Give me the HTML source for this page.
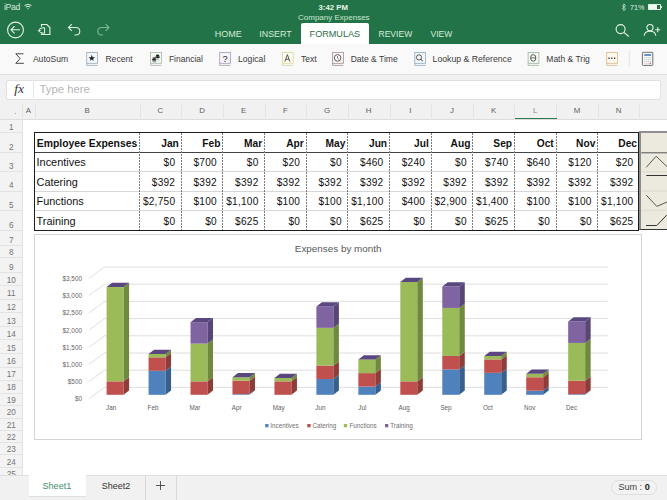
<!DOCTYPE html><html><head><meta charset="utf-8"><style>
*{margin:0;padding:0;box-sizing:border-box}
html,body{width:667px;height:500px;overflow:hidden;background:#fff;font-family:"Liberation Sans",sans-serif}
.a{position:absolute;white-space:nowrap}
</style></head><body>

<div class="a" style="left:0;top:0;width:667px;height:44px;background:#237348"></div>
<div class="a" style="left:4px;top:3.2px;font-size:8.6px;letter-spacing:-0.3px;line-height:9px;color:#d6eadb">iPad</div>
<svg class="a" style="left:24px;top:4px" width="8" height="6" viewBox="0 0 8 6"><path d="M0.5 1.5 Q4 -0.8 7.5 1.5" stroke="#d6eadb" stroke-width="1" fill="none"/><path d="M1.8 3 Q4 1.6 6.2 3" stroke="#d6eadb" stroke-width="1" fill="none"/><path d="M3 4.6 L4 5.6 L5 4.6 Q4 3.8 3 4.6Z" fill="#d6eadb"/></svg>
<div class="a" style="left:318.5px;top:2.5px;font-size:7.8px;line-height:9px;color:#e8f4ea;font-weight:bold">3:42 PM</div>
<div class="a" style="left:298px;top:12.5px;font-size:8px;line-height:9px;color:#c8e6cf">Company Expenses</div>
<svg class="a" style="left:620.5px;top:2.6px" width="6" height="9" viewBox="0 0 6 9"><path d="M1 2.6 L4.6 5.8 L2.8 7.8 V0.8 L4.6 2.8 L1 6" stroke="#c4e2cc" stroke-width="0.8" fill="none"/></svg>
<div class="a" style="left:630px;top:2.5px;font-size:7.2px;line-height:9px;color:#e0f0e4">71%</div>
<div class="a" style="left:648px;top:4.3px;width:13.2px;height:5.8px;border:0.6px solid #e0f0e4;border-radius:0.8px"></div>
<div class="a" style="left:649px;top:5.3px;width:8.3px;height:3.6px;background:#f2faf4"></div>
<div class="a" style="left:661.2px;top:6px;width:1.2px;height:2.2px;background:#e0f0e4"></div>
<div class="a" style="left:301px;top:23.3px;width:68px;height:21px;background:#fff;border-radius:2px 2px 0 0"></div>
<div class="a" style="left:214.7px;top:29.4px;font-size:9px;line-height:10px;color:#d3ecd9">HOME</div>
<div class="a" style="left:259.3px;top:29.4px;font-size:8.9px;line-height:10px;color:#d3ecd9">INSERT</div>
<div class="a" style="left:378.5px;top:29.4px;font-size:8.55px;line-height:10px;color:#d3ecd9">REVIEW</div>
<div class="a" style="left:430.5px;top:29.4px;font-size:8.5px;line-height:10px;color:#d3ecd9">VIEW</div>
<div class="a" style="left:309.6px;top:29.4px;font-size:9.1px;line-height:10px;color:#2c6b45">FORMULAS</div>
<svg class="a" style="left:0;top:15px" width="130" height="30" viewBox="0 15 130 30"><circle cx="15.5" cy="30" r="7.9" stroke="#e6f3e9" stroke-width="1.1" fill="none"/><path d="M11 29.8 H20 M14.6 26.2 L11 29.8 L14.6 33.4" stroke="#e6f3e9" stroke-width="1.1" fill="none"/><path d="M41.5 26.8 V24.5 H46.8 L49.9 27.6 V34.5 H41.5 V33.4" stroke="#e6f3e9" stroke-width="1.1" fill="none"/><path d="M44.6 27.8 V33.3" stroke="#e6f3e9" stroke-width="1" fill="none"/><path d="M44.6 27.8 Q39.6 27.6 39.3 30.6 M40.3 32.1 Q41.2 33.3 44.6 33.3" stroke="#e6f3e9" stroke-width="1.1" fill="none"/><path d="M37.7 30.1 L40.9 30.1 L39.3 32.4Z" fill="#e6f3e9"/><path d="M68.5 27.5 H75.5 Q79.8 27.5 79.8 31.2 Q79.8 35 75.5 35 H74.5 M71.8 24.2 L68.5 27.5 L71.8 30.8" stroke="#dff0e3" stroke-width="1.1" fill="none"/><path d="M109 27.5 H102 Q97.8 27.5 97.8 31.2 Q97.8 35 102 35 H103 M105.7 24.2 L109 27.5 L105.7 30.8" stroke="#7fb793" stroke-width="1.1" fill="none"/></svg>
<svg class="a" style="left:600px;top:15px" width="67" height="30" viewBox="600 15 67 30"><circle cx="620.6" cy="29.1" r="4.5" stroke="#e6f3e9" stroke-width="1.1" fill="none"/><path d="M623.9 32.4 L628.8 36.5" stroke="#e6f3e9" stroke-width="1.1" fill="none"/><circle cx="650" cy="27.6" r="3.1" stroke="#e6f3e9" stroke-width="1.1" fill="none"/><path d="M644.2 35.8 Q644.5 31.2 650 31.2 Q655.5 31.2 655.8 35.8" stroke="#e6f3e9" stroke-width="1.1" fill="none"/><path d="M655.2 29.7 H660.2 M657.7 27.2 V32.2" stroke="#e6f3e9" stroke-width="1.1" fill="none"/></svg>
<div class="a" style="left:0;top:44px;width:667px;height:31px;background:#f9f9f9;border-bottom:1px solid #dedede"></div>
<div class="a" style="left:32.9px;top:53.5px;font-size:8.6px;line-height:10px;color:#3c3c3c">AutoSum</div>
<div class="a" style="left:105.4px;top:53.5px;font-size:8.6px;line-height:10px;color:#3c3c3c">Recent</div>
<div class="a" style="left:168.9px;top:53.5px;font-size:8.5px;line-height:10px;color:#3c3c3c">Financial</div>
<div class="a" style="left:238px;top:53.5px;font-size:8.65px;line-height:10px;color:#3c3c3c">Logical</div>
<div class="a" style="left:301px;top:53.5px;font-size:8.6px;line-height:10px;color:#3c3c3c">Text</div>
<div class="a" style="left:350.7px;top:53.5px;font-size:8.55px;line-height:10px;color:#3c3c3c">Date & Time</div>
<div class="a" style="left:432.6px;top:53.5px;font-size:8.7px;line-height:10px;color:#3c3c3c">Lookup & Reference</div>
<div class="a" style="left:546.3px;top:53.5px;font-size:8.5px;line-height:10px;color:#3c3c3c">Math & Trig</div>
<svg class="a" style="left:0;top:44px" width="667" height="30" viewBox="0 44 667 30"><path d="M23.5 53.8 H15.8 L20.2 58.5 L15.8 63.3 H23.8" stroke="#333" stroke-width="0.9" fill="none"/>
<rect x="86.70" y="52.4" width="10.8" height="10.9" fill="#f3f7fb" stroke="#97a7b8" stroke-width="0.8"/><path d="M86.70 63 V65.4 H97.50" stroke="#97a7b8" stroke-width="0.8" fill="none"/>
<rect x="150.60" y="52.4" width="10.8" height="10.9" fill="#f3f8f3" stroke="#a3b8a3" stroke-width="0.8"/><path d="M150.60 63 V65.4 H161.40" stroke="#a3b8a3" stroke-width="0.8" fill="none"/>
<rect x="219.70" y="52.4" width="10.8" height="10.9" fill="#f7f5fa" stroke="#a49bb8" stroke-width="0.8"/><path d="M219.70 63 V65.4 H230.50" stroke="#a49bb8" stroke-width="0.8" fill="none"/>
<rect x="282.40" y="52.4" width="10.8" height="10.9" fill="#fbfbef" stroke="#dcd79a" stroke-width="0.8"/><path d="M282.40 63 V65.4 H293.20" stroke="#dcd79a" stroke-width="0.8" fill="none"/>
<rect x="332.60" y="52.4" width="10.8" height="10.9" fill="#faf6f6" stroke="#a88c8c" stroke-width="0.8"/><path d="M332.60 63 V65.4 H343.40" stroke="#a88c8c" stroke-width="0.8" fill="none"/>
<rect x="414.80" y="52.4" width="10.8" height="10.9" fill="#f3f7fb" stroke="#8fa9c4" stroke-width="0.8"/><path d="M414.80 63 V65.4 H425.60" stroke="#8fa9c4" stroke-width="0.8" fill="none"/>
<rect x="528.10" y="52.4" width="10.8" height="10.9" fill="#f3f8f3" stroke="#9bb69b" stroke-width="0.8"/><path d="M528.10 63 V65.4 H538.90" stroke="#9bb69b" stroke-width="0.8" fill="none"/>
<rect x="606.70" y="52.4" width="10.8" height="10.9" fill="#fbf6ee" stroke="#ddb788" stroke-width="0.8"/><path d="M606.70 63 V65.4 H617.50" stroke="#ddb788" stroke-width="0.8" fill="none"/>
<path d="M91.8 54.8 L92.6 57.2 L95.1 57.2 L93.1 58.7 L93.8 61.1 L91.8 59.6 L89.8 61.1 L90.5 58.7 L88.5 57.2 L91 57.2Z" fill="#1e1e1e"/>
<ellipse cx="157.6" cy="56.9" rx="2.3" ry="1.3" fill="#222"/><path d="M155.3 56.3 Q157.6 55.2 159.9 56.3" stroke="#fff" stroke-width="0.5" fill="none"/><ellipse cx="157.6" cy="55.4" rx="1.7" ry="0.8" fill="#222"/><ellipse cx="154.2" cy="59.5" rx="2.3" ry="1.3" fill="#222"/><path d="M151.9 58.9 Q154.2 57.8 156.5 58.9" stroke="#fff" stroke-width="0.5" fill="none"/><ellipse cx="154.2" cy="58" rx="1.7" ry="0.8" fill="#222"/><path d="M152.5 61.5 Q154.4 62.3 156.3 61.5" stroke="#555" stroke-width="0.7" fill="none"/><path d="M157.3 58.8 L158.8 60.3" stroke="#444" stroke-width="0.7"/>
<text x="222.6" y="61.6" font-size="9.2" font-family="Liberation Sans" fill="#222">?</text>
<path d="M284.9 61.6 L287.4 54.6 L289.9 61.6 M285.8 59.3 H289" stroke="#333" stroke-width="0.8" fill="none"/>
<circle cx="337.6" cy="57.9" r="3.3" stroke="#333" stroke-width="0.8" fill="#fff"/><path d="M337.5 56.1 V58.1 L338.9 59.2" stroke="#444" stroke-width="0.7" fill="none"/>
<circle cx="419" cy="57.4" r="2.6" stroke="#333" stroke-width="0.8" fill="#fff"/><path d="M420.8 59.3 L422.7 61.1" stroke="#222" stroke-width="1"/>
<ellipse cx="533.2" cy="57.9" rx="2.6" ry="3.3" stroke="#333" stroke-width="0.8" fill="none"/><path d="M530.8 57.9 H535.6" stroke="#333" stroke-width="0.7"/>
<path d="M608.4 57.5 h1.2 v1.6 h-1.2z M611.2 57.5 h1.2 v1.6 h-1.2z M614 57.5 h1.2 v1.6 h-1.2z" fill="#333"/>
<path d="M629.3 50.6 V66.6" stroke="#dedede" stroke-width="0.8"/>
<rect x="642.4" y="52.3" width="10.4" height="13.1" rx="0.8" fill="#f6f8fa" stroke="#606060" stroke-width="0.9"/><rect x="644.2" y="54.2" width="6.8" height="1.6" fill="#4a78c0"/>
<rect x="644.10" y="57.00" width="1.3" height="1.2" fill="#cfd6cf"/>
<rect x="645.95" y="57.00" width="1.3" height="1.2" fill="#cfd6cf"/>
<rect x="647.80" y="57.00" width="1.3" height="1.2" fill="#cfd6cf"/>
<rect x="649.65" y="57.00" width="1.3" height="1.2" fill="#cfd6cf"/>
<rect x="644.10" y="58.90" width="1.3" height="1.2" fill="#cfd6cf"/>
<rect x="645.95" y="58.90" width="1.3" height="1.2" fill="#cfd6cf"/>
<rect x="647.80" y="58.90" width="1.3" height="1.2" fill="#cfd6cf"/>
<rect x="649.65" y="58.90" width="1.3" height="1.2" fill="#cfd6cf"/>
<rect x="644.10" y="60.80" width="1.3" height="1.2" fill="#cfd6cf"/>
<rect x="645.95" y="60.80" width="1.3" height="1.2" fill="#cfd6cf"/>
<rect x="647.80" y="60.80" width="1.3" height="1.2" fill="#cfd6cf"/>
<rect x="649.65" y="60.80" width="1.3" height="1.2" fill="#cfd6cf"/>
<rect x="644.10" y="62.70" width="1.3" height="1.2" fill="#e8c8d0"/>
<rect x="645.95" y="62.70" width="1.3" height="1.2" fill="#e8c8d0"/>
<rect x="647.80" y="62.70" width="1.3" height="1.2" fill="#e8c8d0"/>
<rect x="649.65" y="62.70" width="1.3" height="1.2" fill="#c05a6a"/>
</svg>
<div class="a" style="left:0;top:75px;width:667px;height:25px;background:#f1f1f1"></div>
<div class="a" style="left:6px;top:80.2px;width:655px;height:19.6px;background:#fff;border:0.7px solid #e0e0e0;border-radius:2px"></div>
<div class="a" style="left:33px;top:82px;width:0.7px;height:16px;background:#e3e3e3"></div>
<div class="a" style="left:14.3px;top:82px;font-size:13.5px;line-height:14px;font-family:'Liberation Serif',serif;font-style:italic;color:#333">fx</div>
<div class="a" style="left:39.6px;top:83.2px;font-size:11.3px;line-height:13px;color:#b5b5b5">Type here</div>
<div class="a" style="left:0;top:100px;width:667px;height:20px;background:#f1f1f1;border-bottom:1px solid #dcdcdc"></div>
<div class="a" style="left:22.40px;top:104px;width:0.8px;height:15.5px;background:#e4e4e4"></div>
<div class="a" style="left:34.50px;top:104px;width:0.8px;height:15.5px;background:#e4e4e4"></div>
<div class="a" style="left:139.60px;top:104px;width:0.8px;height:15.5px;background:#e4e4e4"></div>
<div class="a" style="left:181.25px;top:104px;width:0.8px;height:15.5px;background:#e4e4e4"></div>
<div class="a" style="left:222.90px;top:104px;width:0.8px;height:15.5px;background:#e4e4e4"></div>
<div class="a" style="left:264.55px;top:104px;width:0.8px;height:15.5px;background:#e4e4e4"></div>
<div class="a" style="left:306.20px;top:104px;width:0.8px;height:15.5px;background:#e4e4e4"></div>
<div class="a" style="left:347.85px;top:104px;width:0.8px;height:15.5px;background:#e4e4e4"></div>
<div class="a" style="left:389.50px;top:104px;width:0.8px;height:15.5px;background:#e4e4e4"></div>
<div class="a" style="left:431.15px;top:104px;width:0.8px;height:15.5px;background:#e4e4e4"></div>
<div class="a" style="left:472.80px;top:104px;width:0.8px;height:15.5px;background:#e4e4e4"></div>
<div class="a" style="left:514.45px;top:104px;width:0.8px;height:15.5px;background:#e4e4e4"></div>
<div class="a" style="left:556.10px;top:104px;width:0.8px;height:15.5px;background:#e4e4e4"></div>
<div class="a" style="left:597.75px;top:104px;width:0.8px;height:15.5px;background:#e4e4e4"></div>
<div class="a" style="left:639.40px;top:104px;width:0.8px;height:15.5px;background:#e4e4e4"></div>
<div class="a" style="left:22.40px;top:105.8px;width:12.10px;text-align:center;font-size:7.9px;line-height:10px;color:#5e5e5e">A</div>
<div class="a" style="left:34.50px;top:105.8px;width:105.10px;text-align:center;font-size:7.9px;line-height:10px;color:#5e5e5e">B</div>
<div class="a" style="left:139.60px;top:105.8px;width:41.65px;text-align:center;font-size:7.9px;line-height:10px;color:#5e5e5e">C</div>
<div class="a" style="left:181.25px;top:105.8px;width:41.65px;text-align:center;font-size:7.9px;line-height:10px;color:#5e5e5e">D</div>
<div class="a" style="left:222.90px;top:105.8px;width:41.65px;text-align:center;font-size:7.9px;line-height:10px;color:#5e5e5e">E</div>
<div class="a" style="left:264.55px;top:105.8px;width:41.65px;text-align:center;font-size:7.9px;line-height:10px;color:#5e5e5e">F</div>
<div class="a" style="left:306.20px;top:105.8px;width:41.65px;text-align:center;font-size:7.9px;line-height:10px;color:#5e5e5e">G</div>
<div class="a" style="left:347.85px;top:105.8px;width:41.65px;text-align:center;font-size:7.9px;line-height:10px;color:#5e5e5e">H</div>
<div class="a" style="left:389.50px;top:105.8px;width:41.65px;text-align:center;font-size:7.9px;line-height:10px;color:#5e5e5e">I</div>
<div class="a" style="left:431.15px;top:105.8px;width:41.65px;text-align:center;font-size:7.9px;line-height:10px;color:#5e5e5e">J</div>
<div class="a" style="left:472.80px;top:105.8px;width:41.65px;text-align:center;font-size:7.9px;line-height:10px;color:#5e5e5e">K</div>
<div class="a" style="left:514.45px;top:105.8px;width:41.65px;text-align:center;font-size:7.9px;line-height:10px;color:#8a8a8a">L</div>
<div class="a" style="left:556.10px;top:105.8px;width:41.65px;text-align:center;font-size:7.9px;line-height:10px;color:#5e5e5e">M</div>
<div class="a" style="left:597.75px;top:105.8px;width:41.65px;text-align:center;font-size:7.9px;line-height:10px;color:#5e5e5e">N</div>
<div class="a" style="left:515.45px;top:117.9px;width:41.15px;height:1.5px;background:#2d7b4f"></div>
<div class="a" style="left:14.7px;top:112.7px;width:1.4px;height:1.4px;border-radius:1px;background:#8a8a8a"></div>
<div class="a" style="left:0;top:119.5px;width:23px;height:356px;background:#f3f3f3;border-right:0.8px solid #e2e2e2"></div>
<div class="a" style="left:0;top:132.10px;width:22.4px;height:0.8px;background:#e3e3e3"></div>
<div class="a" style="left:0;top:122.90px;width:22.4px;text-align:center;font-size:8.2px;line-height:10px;color:#747474">1</div>
<div class="a" style="left:0;top:151.90px;width:22.4px;height:0.8px;background:#e3e3e3"></div>
<div class="a" style="left:0;top:142.70px;width:22.4px;text-align:center;font-size:8.2px;line-height:10px;color:#747474">2</div>
<div class="a" style="left:0;top:171.10px;width:22.4px;height:0.8px;background:#e3e3e3"></div>
<div class="a" style="left:0;top:161.90px;width:22.4px;text-align:center;font-size:8.2px;line-height:10px;color:#747474">3</div>
<div class="a" style="left:0;top:190.60px;width:22.4px;height:0.8px;background:#e3e3e3"></div>
<div class="a" style="left:0;top:181.40px;width:22.4px;text-align:center;font-size:8.2px;line-height:10px;color:#747474">4</div>
<div class="a" style="left:0;top:210.10px;width:22.4px;height:0.8px;background:#e3e3e3"></div>
<div class="a" style="left:0;top:200.90px;width:22.4px;text-align:center;font-size:8.2px;line-height:10px;color:#747474">5</div>
<div class="a" style="left:0;top:229.80px;width:22.4px;height:0.8px;background:#e3e3e3"></div>
<div class="a" style="left:0;top:220.60px;width:22.4px;text-align:center;font-size:8.2px;line-height:10px;color:#747474">6</div>
<div class="a" style="left:0;top:245.20px;width:22.4px;height:0.8px;background:#e3e3e3"></div>
<div class="a" style="left:0;top:236.00px;width:22.4px;text-align:center;font-size:8.2px;line-height:10px;color:#747474">7</div>
<div class="a" style="left:0;top:257.40px;width:22.4px;height:0.8px;background:#e3e3e3"></div>
<div class="a" style="left:0;top:248.20px;width:22.4px;text-align:center;font-size:8.2px;line-height:10px;color:#747474">8</div>
<div class="a" style="left:0;top:271.80px;width:22.4px;height:0.8px;background:#e3e3e3"></div>
<div class="a" style="left:0;top:262.60px;width:22.4px;text-align:center;font-size:8.2px;line-height:10px;color:#747474">9</div>
<div class="a" style="left:0;top:285.30px;width:22.4px;height:0.8px;background:#e3e3e3"></div>
<div class="a" style="left:0;top:276.10px;width:22.4px;text-align:center;font-size:8.2px;line-height:10px;color:#747474">10</div>
<div class="a" style="left:0;top:298.60px;width:22.4px;height:0.8px;background:#e3e3e3"></div>
<div class="a" style="left:0;top:289.40px;width:22.4px;text-align:center;font-size:8.2px;line-height:10px;color:#747474">11</div>
<div class="a" style="left:0;top:312.20px;width:22.4px;height:0.8px;background:#e3e3e3"></div>
<div class="a" style="left:0;top:303.00px;width:22.4px;text-align:center;font-size:8.2px;line-height:10px;color:#747474">12</div>
<div class="a" style="left:0;top:325.90px;width:22.4px;height:0.8px;background:#e3e3e3"></div>
<div class="a" style="left:0;top:316.70px;width:22.4px;text-align:center;font-size:8.2px;line-height:10px;color:#747474">13</div>
<div class="a" style="left:0;top:339.20px;width:22.4px;height:0.8px;background:#e3e3e3"></div>
<div class="a" style="left:0;top:330.00px;width:22.4px;text-align:center;font-size:8.2px;line-height:10px;color:#747474">14</div>
<div class="a" style="left:0;top:353.00px;width:22.4px;height:0.8px;background:#e3e3e3"></div>
<div class="a" style="left:0;top:343.80px;width:22.4px;text-align:center;font-size:8.2px;line-height:10px;color:#747474">15</div>
<div class="a" style="left:0;top:366.60px;width:22.4px;height:0.8px;background:#e3e3e3"></div>
<div class="a" style="left:0;top:357.40px;width:22.4px;text-align:center;font-size:8.2px;line-height:10px;color:#747474">16</div>
<div class="a" style="left:0;top:379.60px;width:22.4px;height:0.8px;background:#e3e3e3"></div>
<div class="a" style="left:0;top:370.40px;width:22.4px;text-align:center;font-size:8.2px;line-height:10px;color:#747474">17</div>
<div class="a" style="left:0;top:392.60px;width:22.4px;height:0.8px;background:#e3e3e3"></div>
<div class="a" style="left:0;top:383.40px;width:22.4px;text-align:center;font-size:8.2px;line-height:10px;color:#747474">18</div>
<div class="a" style="left:0;top:405.10px;width:22.4px;height:0.8px;background:#e3e3e3"></div>
<div class="a" style="left:0;top:395.90px;width:22.4px;text-align:center;font-size:8.2px;line-height:10px;color:#747474">19</div>
<div class="a" style="left:0;top:417.60px;width:22.4px;height:0.8px;background:#e3e3e3"></div>
<div class="a" style="left:0;top:408.40px;width:22.4px;text-align:center;font-size:8.2px;line-height:10px;color:#747474">20</div>
<div class="a" style="left:0;top:429.80px;width:22.4px;height:0.8px;background:#e3e3e3"></div>
<div class="a" style="left:0;top:420.60px;width:22.4px;text-align:center;font-size:8.2px;line-height:10px;color:#747474">21</div>
<div class="a" style="left:0;top:442.20px;width:22.4px;height:0.8px;background:#e3e3e3"></div>
<div class="a" style="left:0;top:433.00px;width:22.4px;text-align:center;font-size:8.2px;line-height:10px;color:#747474">22</div>
<div class="a" style="left:0;top:454.40px;width:22.4px;height:0.8px;background:#e3e3e3"></div>
<div class="a" style="left:0;top:445.20px;width:22.4px;text-align:center;font-size:8.2px;line-height:10px;color:#747474">23</div>
<div class="a" style="left:0;top:467.00px;width:22.4px;height:0.8px;background:#e3e3e3"></div>
<div class="a" style="left:0;top:457.80px;width:22.4px;text-align:center;font-size:8.2px;line-height:10px;color:#747474">24</div>
<div class="a" style="left:0;top:479.60px;width:22.4px;height:0.8px;background:#e3e3e3"></div>
<div class="a" style="left:0;top:470.40px;width:22.4px;text-align:center;font-size:8.2px;line-height:10px;color:#747474">25</div>
<div class="a" style="left:23px;top:119.5px;width:700px;height:356px;background:#fff"></div>
<div class="a" style="left:34.2px;top:171.10px;width:604.80px;height:0.8px;background:#d6d6d6"></div>
<div class="a" style="left:34.2px;top:190.60px;width:604.80px;height:0.8px;background:#d6d6d6"></div>
<div class="a" style="left:34.2px;top:210.10px;width:604.80px;height:0.8px;background:#d6d6d6"></div>
<div class="a" style="left:34.2px;top:151.90px;width:604.80px;height:1.1px;background:#444"></div>
<svg class="a" style="left:0;top:0" width="667" height="240" viewBox="0 0 667 240"><path d="M139.50 133 V230" stroke="#7a7a7a" stroke-width="1" stroke-dasharray="2 1" fill="none"/><path d="M181.50 133 V230" stroke="#7a7a7a" stroke-width="1" stroke-dasharray="2 1" fill="none"/><path d="M222.50 133 V230" stroke="#7a7a7a" stroke-width="1" stroke-dasharray="2 1" fill="none"/><path d="M264.50 133 V230" stroke="#7a7a7a" stroke-width="1" stroke-dasharray="2 1" fill="none"/><path d="M306.50 133 V230" stroke="#7a7a7a" stroke-width="1" stroke-dasharray="2 1" fill="none"/><path d="M347.50 133 V230" stroke="#7a7a7a" stroke-width="1" stroke-dasharray="2 1" fill="none"/><path d="M389.50 133 V230" stroke="#7a7a7a" stroke-width="1" stroke-dasharray="2 1" fill="none"/><path d="M431.50 133 V230" stroke="#7a7a7a" stroke-width="1" stroke-dasharray="2 1" fill="none"/><path d="M472.50 133 V230" stroke="#7a7a7a" stroke-width="1" stroke-dasharray="2 1" fill="none"/><path d="M514.50 133 V230" stroke="#7a7a7a" stroke-width="1" stroke-dasharray="2 1" fill="none"/><path d="M556.50 133 V230" stroke="#7a7a7a" stroke-width="1" stroke-dasharray="2 1" fill="none"/><path d="M597.50 133 V230" stroke="#7a7a7a" stroke-width="1" stroke-dasharray="2 1" fill="none"/></svg>
<div class="a" style="left:34.2px;top:132.3px;width:605.30px;height:98.60px;border:1.3px solid #1e1e1e"></div>
<div class="a" style="left:36.8px;top:137.60px;font-size:10.4px;line-height:12px;font-weight:bold;color:#111">Employee Expenses</div>
<div class="a" style="left:139.25px;top:137.60px;width:39.60px;text-align:right;font-size:10.2px;line-height:12px;font-weight:bold;color:#111">Jan</div>
<div class="a" style="left:180.90px;top:137.60px;width:39.60px;text-align:right;font-size:10.2px;line-height:12px;font-weight:bold;color:#111">Feb</div>
<div class="a" style="left:222.55px;top:137.60px;width:39.60px;text-align:right;font-size:10.2px;line-height:12px;font-weight:bold;color:#111">Mar</div>
<div class="a" style="left:264.20px;top:137.60px;width:39.60px;text-align:right;font-size:10.2px;line-height:12px;font-weight:bold;color:#111">Apr</div>
<div class="a" style="left:305.85px;top:137.60px;width:39.60px;text-align:right;font-size:10.2px;line-height:12px;font-weight:bold;color:#111">May</div>
<div class="a" style="left:347.50px;top:137.60px;width:39.60px;text-align:right;font-size:10.2px;line-height:12px;font-weight:bold;color:#111">Jun</div>
<div class="a" style="left:389.15px;top:137.60px;width:39.60px;text-align:right;font-size:10.2px;line-height:12px;font-weight:bold;color:#111">Jul</div>
<div class="a" style="left:430.80px;top:137.60px;width:39.60px;text-align:right;font-size:10.2px;line-height:12px;font-weight:bold;color:#111">Aug</div>
<div class="a" style="left:472.45px;top:137.60px;width:39.60px;text-align:right;font-size:10.2px;line-height:12px;font-weight:bold;color:#111">Sep</div>
<div class="a" style="left:514.10px;top:137.60px;width:39.60px;text-align:right;font-size:10.2px;line-height:12px;font-weight:bold;color:#111">Oct</div>
<div class="a" style="left:555.75px;top:137.60px;width:39.60px;text-align:right;font-size:10.2px;line-height:12px;font-weight:bold;color:#111">Nov</div>
<div class="a" style="left:597.40px;top:137.60px;width:39.60px;text-align:right;font-size:10.2px;line-height:12px;font-weight:bold;color:#111">Dec</div>
<div class="a" style="left:36.6px;top:156.00px;font-size:10.9px;line-height:12px;color:#111">Incentives</div>
<div class="a" style="left:139.25px;top:157.20px;width:36.00px;text-align:right;font-size:10.1px;letter-spacing:0.25px;line-height:12px;color:#111">$0</div>
<div class="a" style="left:180.90px;top:157.20px;width:36.00px;text-align:right;font-size:10.1px;letter-spacing:0.25px;line-height:12px;color:#111">$700</div>
<div class="a" style="left:222.55px;top:157.20px;width:36.00px;text-align:right;font-size:10.1px;letter-spacing:0.25px;line-height:12px;color:#111">$0</div>
<div class="a" style="left:264.20px;top:157.20px;width:36.00px;text-align:right;font-size:10.1px;letter-spacing:0.25px;line-height:12px;color:#111">$20</div>
<div class="a" style="left:305.85px;top:157.20px;width:36.00px;text-align:right;font-size:10.1px;letter-spacing:0.25px;line-height:12px;color:#111">$0</div>
<div class="a" style="left:347.50px;top:157.20px;width:36.00px;text-align:right;font-size:10.1px;letter-spacing:0.25px;line-height:12px;color:#111">$460</div>
<div class="a" style="left:389.15px;top:157.20px;width:36.00px;text-align:right;font-size:10.1px;letter-spacing:0.25px;line-height:12px;color:#111">$240</div>
<div class="a" style="left:430.80px;top:157.20px;width:36.00px;text-align:right;font-size:10.1px;letter-spacing:0.25px;line-height:12px;color:#111">$0</div>
<div class="a" style="left:472.45px;top:157.20px;width:36.00px;text-align:right;font-size:10.1px;letter-spacing:0.25px;line-height:12px;color:#111">$740</div>
<div class="a" style="left:514.10px;top:157.20px;width:36.00px;text-align:right;font-size:10.1px;letter-spacing:0.25px;line-height:12px;color:#111">$640</div>
<div class="a" style="left:555.75px;top:157.20px;width:36.00px;text-align:right;font-size:10.1px;letter-spacing:0.25px;line-height:12px;color:#111">$120</div>
<div class="a" style="left:597.40px;top:157.20px;width:36.00px;text-align:right;font-size:10.1px;letter-spacing:0.25px;line-height:12px;color:#111">$20</div>
<div class="a" style="left:36.6px;top:175.50px;font-size:10.9px;line-height:12px;color:#111">Catering</div>
<div class="a" style="left:139.25px;top:176.70px;width:36.00px;text-align:right;font-size:10.1px;letter-spacing:0.25px;line-height:12px;color:#111">$392</div>
<div class="a" style="left:180.90px;top:176.70px;width:36.00px;text-align:right;font-size:10.1px;letter-spacing:0.25px;line-height:12px;color:#111">$392</div>
<div class="a" style="left:222.55px;top:176.70px;width:36.00px;text-align:right;font-size:10.1px;letter-spacing:0.25px;line-height:12px;color:#111">$392</div>
<div class="a" style="left:264.20px;top:176.70px;width:36.00px;text-align:right;font-size:10.1px;letter-spacing:0.25px;line-height:12px;color:#111">$392</div>
<div class="a" style="left:305.85px;top:176.70px;width:36.00px;text-align:right;font-size:10.1px;letter-spacing:0.25px;line-height:12px;color:#111">$392</div>
<div class="a" style="left:347.50px;top:176.70px;width:36.00px;text-align:right;font-size:10.1px;letter-spacing:0.25px;line-height:12px;color:#111">$392</div>
<div class="a" style="left:389.15px;top:176.70px;width:36.00px;text-align:right;font-size:10.1px;letter-spacing:0.25px;line-height:12px;color:#111">$392</div>
<div class="a" style="left:430.80px;top:176.70px;width:36.00px;text-align:right;font-size:10.1px;letter-spacing:0.25px;line-height:12px;color:#111">$392</div>
<div class="a" style="left:472.45px;top:176.70px;width:36.00px;text-align:right;font-size:10.1px;letter-spacing:0.25px;line-height:12px;color:#111">$392</div>
<div class="a" style="left:514.10px;top:176.70px;width:36.00px;text-align:right;font-size:10.1px;letter-spacing:0.25px;line-height:12px;color:#111">$392</div>
<div class="a" style="left:555.75px;top:176.70px;width:36.00px;text-align:right;font-size:10.1px;letter-spacing:0.25px;line-height:12px;color:#111">$392</div>
<div class="a" style="left:597.40px;top:176.70px;width:36.00px;text-align:right;font-size:10.1px;letter-spacing:0.25px;line-height:12px;color:#111">$392</div>
<div class="a" style="left:36.6px;top:195.00px;font-size:10.9px;line-height:12px;color:#111">Functions</div>
<div class="a" style="left:139.25px;top:196.20px;width:36.00px;text-align:right;font-size:10.1px;letter-spacing:0.25px;line-height:12px;color:#111">$2,750</div>
<div class="a" style="left:180.90px;top:196.20px;width:36.00px;text-align:right;font-size:10.1px;letter-spacing:0.25px;line-height:12px;color:#111">$100</div>
<div class="a" style="left:222.55px;top:196.20px;width:36.00px;text-align:right;font-size:10.1px;letter-spacing:0.25px;line-height:12px;color:#111">$1,100</div>
<div class="a" style="left:264.20px;top:196.20px;width:36.00px;text-align:right;font-size:10.1px;letter-spacing:0.25px;line-height:12px;color:#111">$100</div>
<div class="a" style="left:305.85px;top:196.20px;width:36.00px;text-align:right;font-size:10.1px;letter-spacing:0.25px;line-height:12px;color:#111">$100</div>
<div class="a" style="left:347.50px;top:196.20px;width:36.00px;text-align:right;font-size:10.1px;letter-spacing:0.25px;line-height:12px;color:#111">$1,100</div>
<div class="a" style="left:389.15px;top:196.20px;width:36.00px;text-align:right;font-size:10.1px;letter-spacing:0.25px;line-height:12px;color:#111">$400</div>
<div class="a" style="left:430.80px;top:196.20px;width:36.00px;text-align:right;font-size:10.1px;letter-spacing:0.25px;line-height:12px;color:#111">$2,900</div>
<div class="a" style="left:472.45px;top:196.20px;width:36.00px;text-align:right;font-size:10.1px;letter-spacing:0.25px;line-height:12px;color:#111">$1,400</div>
<div class="a" style="left:514.10px;top:196.20px;width:36.00px;text-align:right;font-size:10.1px;letter-spacing:0.25px;line-height:12px;color:#111">$100</div>
<div class="a" style="left:555.75px;top:196.20px;width:36.00px;text-align:right;font-size:10.1px;letter-spacing:0.25px;line-height:12px;color:#111">$100</div>
<div class="a" style="left:597.40px;top:196.20px;width:36.00px;text-align:right;font-size:10.1px;letter-spacing:0.25px;line-height:12px;color:#111">$1,100</div>
<div class="a" style="left:36.6px;top:214.50px;font-size:10.9px;line-height:12px;color:#111">Training</div>
<div class="a" style="left:139.25px;top:215.70px;width:36.00px;text-align:right;font-size:10.1px;letter-spacing:0.25px;line-height:12px;color:#111">$0</div>
<div class="a" style="left:180.90px;top:215.70px;width:36.00px;text-align:right;font-size:10.1px;letter-spacing:0.25px;line-height:12px;color:#111">$0</div>
<div class="a" style="left:222.55px;top:215.70px;width:36.00px;text-align:right;font-size:10.1px;letter-spacing:0.25px;line-height:12px;color:#111">$625</div>
<div class="a" style="left:264.20px;top:215.70px;width:36.00px;text-align:right;font-size:10.1px;letter-spacing:0.25px;line-height:12px;color:#111">$0</div>
<div class="a" style="left:305.85px;top:215.70px;width:36.00px;text-align:right;font-size:10.1px;letter-spacing:0.25px;line-height:12px;color:#111">$0</div>
<div class="a" style="left:347.50px;top:215.70px;width:36.00px;text-align:right;font-size:10.1px;letter-spacing:0.25px;line-height:12px;color:#111">$625</div>
<div class="a" style="left:389.15px;top:215.70px;width:36.00px;text-align:right;font-size:10.1px;letter-spacing:0.25px;line-height:12px;color:#111">$0</div>
<div class="a" style="left:430.80px;top:215.70px;width:36.00px;text-align:right;font-size:10.1px;letter-spacing:0.25px;line-height:12px;color:#111">$0</div>
<div class="a" style="left:472.45px;top:215.70px;width:36.00px;text-align:right;font-size:10.1px;letter-spacing:0.25px;line-height:12px;color:#111">$625</div>
<div class="a" style="left:514.10px;top:215.70px;width:36.00px;text-align:right;font-size:10.1px;letter-spacing:0.25px;line-height:12px;color:#111">$0</div>
<div class="a" style="left:555.75px;top:215.70px;width:36.00px;text-align:right;font-size:10.1px;letter-spacing:0.25px;line-height:12px;color:#111">$0</div>
<div class="a" style="left:597.40px;top:215.70px;width:36.00px;text-align:right;font-size:10.1px;letter-spacing:0.25px;line-height:12px;color:#111">$625</div>
<div class="a" style="left:638.9px;top:131.3px;width:40px;height:98.8px;background:#ece9df;border-left:2.4px solid #8c8c8c;border-top:2.2px solid #8f8f8f;border-bottom:1.2px solid #333"></div>
<svg class="a" style="left:640px;top:130px" width="27" height="100" viewBox="640 130 27 100"><path d="M641.3 152.8 H667" stroke="#555" stroke-width="1"/><path d="M641.3 171.8 H667 M641.3 191 H667 M641.3 210.3 H667" stroke="#d8d4c8" stroke-width="0.8"/><path d="M646.3 167.3 L656.2 156.2 L667 166.7" stroke="#333" stroke-width="0.8" fill="none"/><path d="M646.3 175.5 H667" stroke="#333" stroke-width="1" fill="none"/><path d="M646.3 195.2 L656.8 206.4 L667 202" stroke="#333" stroke-width="0.8" fill="none"/><path d="M646 225.5 H656.8 L667 214.8" stroke="#333" stroke-width="1" fill="none"/></svg>
<div class="a" style="left:34.0px;top:234.0px;width:608.00px;height:205.80px;border:0.8px solid #d4d4d4;background:#fff"></div>
<svg class="a" style="left:0;top:0" width="667" height="500" viewBox="0 0 667 500">
<path d="M88.8 399.00 L104.5 387.40 H607.8" stroke="#d6d6d6" stroke-width="0.8" fill="none"/>
<text x="82" y="401.30" font-size="6.4" text-anchor="end" font-family="Liberation Sans" fill="#666666">$0</text>
<path d="M88.8 381.80 L104.5 370.20 H607.8" stroke="#d6d6d6" stroke-width="0.8" fill="none"/>
<text x="82" y="384.10" font-size="6.4" text-anchor="end" font-family="Liberation Sans" fill="#666666">$500</text>
<path d="M88.8 364.60 L104.5 353.00 H607.8" stroke="#d6d6d6" stroke-width="0.8" fill="none"/>
<text x="82" y="366.90" font-size="6.4" text-anchor="end" font-family="Liberation Sans" fill="#666666">$1,000</text>
<path d="M88.8 347.40 L104.5 335.80 H607.8" stroke="#d6d6d6" stroke-width="0.8" fill="none"/>
<text x="82" y="349.70" font-size="6.4" text-anchor="end" font-family="Liberation Sans" fill="#666666">$1,500</text>
<path d="M88.8 330.20 L104.5 318.60 H607.8" stroke="#d6d6d6" stroke-width="0.8" fill="none"/>
<text x="82" y="332.50" font-size="6.4" text-anchor="end" font-family="Liberation Sans" fill="#666666">$2,000</text>
<path d="M88.8 313.00 L104.5 301.40 H607.8" stroke="#d6d6d6" stroke-width="0.8" fill="none"/>
<text x="82" y="315.30" font-size="6.4" text-anchor="end" font-family="Liberation Sans" fill="#666666">$2,500</text>
<path d="M88.8 295.80 L104.5 284.20 H607.8" stroke="#d6d6d6" stroke-width="0.8" fill="none"/>
<text x="82" y="298.10" font-size="6.4" text-anchor="end" font-family="Liberation Sans" fill="#666666">$3,000</text>
<path d="M88.8 278.60 L104.5 267.00 H607.8" stroke="#d6d6d6" stroke-width="0.8" fill="none"/>
<text x="82" y="280.90" font-size="6.4" text-anchor="end" font-family="Liberation Sans" fill="#666666">$3,500</text>
<rect x="106.60" y="381.35" width="17.0" height="13.45" fill="#c0504d"/>
<path d="M123.60 394.80 L129.10 390.60 V377.15 L123.60 381.35Z" fill="#8f3b38"/>
<rect x="106.60" y="287.03" width="17.0" height="94.32" fill="#9bbb59"/>
<path d="M123.60 381.35 L129.10 377.15 V282.83 L123.60 287.03Z" fill="#6f8a3e"/>
<path d="M106.60 287.03 L112.10 282.83 H129.10 L123.60 287.03Z" fill="#5a4780"/>
<text x="111.20" y="409.5" font-size="6.3" text-anchor="middle" font-family="Liberation Sans" fill="#5e5e5e">Jan</text>
<rect x="148.56" y="370.79" width="17.0" height="24.01" fill="#4f81bd"/>
<path d="M165.56 394.80 L171.06 390.60 V366.59 L165.56 370.79Z" fill="#37608f"/>
<rect x="148.56" y="357.34" width="17.0" height="13.45" fill="#c0504d"/>
<path d="M165.56 370.79 L171.06 366.59 V353.14 L165.56 357.34Z" fill="#8f3b38"/>
<rect x="148.56" y="353.91" width="17.0" height="3.43" fill="#9bbb59"/>
<path d="M165.56 357.34 L171.06 353.14 V349.71 L165.56 353.91Z" fill="#6f8a3e"/>
<path d="M148.56 353.91 L154.06 349.71 H171.06 L165.56 353.91Z" fill="#5a4780"/>
<text x="153.05" y="409.5" font-size="6.3" text-anchor="middle" font-family="Liberation Sans" fill="#5e5e5e">Feb</text>
<rect x="190.52" y="381.35" width="17.0" height="13.45" fill="#c0504d"/>
<path d="M207.52 394.80 L213.02 390.60 V377.15 L207.52 381.35Z" fill="#8f3b38"/>
<rect x="190.52" y="343.62" width="17.0" height="37.73" fill="#9bbb59"/>
<path d="M207.52 381.35 L213.02 377.15 V339.42 L207.52 343.62Z" fill="#6f8a3e"/>
<rect x="190.52" y="322.19" width="17.0" height="21.44" fill="#8064a2"/>
<path d="M207.52 343.62 L213.02 339.42 V317.99 L207.52 322.19Z" fill="#584676"/>
<path d="M190.52 322.19 L196.02 317.99 H213.02 L207.52 322.19Z" fill="#5a4780"/>
<text x="194.90" y="409.5" font-size="6.3" text-anchor="middle" font-family="Liberation Sans" fill="#5e5e5e">Mar</text>
<rect x="232.48" y="394.11" width="17.0" height="0.69" fill="#4f81bd"/>
<path d="M249.48 394.80 L254.98 390.60 V389.91 L249.48 394.11Z" fill="#37608f"/>
<rect x="232.48" y="380.67" width="17.0" height="13.45" fill="#c0504d"/>
<path d="M249.48 394.11 L254.98 389.91 V376.47 L249.48 380.67Z" fill="#8f3b38"/>
<rect x="232.48" y="377.24" width="17.0" height="3.43" fill="#9bbb59"/>
<path d="M249.48 380.67 L254.98 376.47 V373.04 L249.48 377.24Z" fill="#6f8a3e"/>
<path d="M232.48 377.24 L237.98 373.04 H254.98 L249.48 377.24Z" fill="#5a4780"/>
<text x="236.75" y="409.5" font-size="6.3" text-anchor="middle" font-family="Liberation Sans" fill="#5e5e5e">Apr</text>
<rect x="274.44" y="381.35" width="17.0" height="13.45" fill="#c0504d"/>
<path d="M291.44 394.80 L296.94 390.60 V377.15 L291.44 381.35Z" fill="#8f3b38"/>
<rect x="274.44" y="377.92" width="17.0" height="3.43" fill="#9bbb59"/>
<path d="M291.44 381.35 L296.94 377.15 V373.72 L291.44 377.92Z" fill="#6f8a3e"/>
<path d="M274.44 377.92 L279.94 373.72 H296.94 L291.44 377.92Z" fill="#5a4780"/>
<text x="278.60" y="409.5" font-size="6.3" text-anchor="middle" font-family="Liberation Sans" fill="#5e5e5e">May</text>
<rect x="316.40" y="379.02" width="17.0" height="15.78" fill="#4f81bd"/>
<path d="M333.40 394.80 L338.90 390.60 V374.82 L333.40 379.02Z" fill="#37608f"/>
<rect x="316.40" y="365.58" width="17.0" height="13.45" fill="#c0504d"/>
<path d="M333.40 379.02 L338.90 374.82 V361.38 L333.40 365.58Z" fill="#8f3b38"/>
<rect x="316.40" y="327.85" width="17.0" height="37.73" fill="#9bbb59"/>
<path d="M333.40 365.58 L338.90 361.38 V323.65 L333.40 327.85Z" fill="#6f8a3e"/>
<rect x="316.40" y="306.41" width="17.0" height="21.44" fill="#8064a2"/>
<path d="M333.40 327.85 L338.90 323.65 V302.21 L333.40 306.41Z" fill="#584676"/>
<path d="M316.40 306.41 L321.90 302.21 H338.90 L333.40 306.41Z" fill="#5a4780"/>
<text x="320.45" y="409.5" font-size="6.3" text-anchor="middle" font-family="Liberation Sans" fill="#5e5e5e">Jun</text>
<rect x="358.36" y="386.57" width="17.0" height="8.23" fill="#4f81bd"/>
<path d="M375.36 394.80 L380.86 390.60 V382.37 L375.36 386.57Z" fill="#37608f"/>
<rect x="358.36" y="373.12" width="17.0" height="13.45" fill="#c0504d"/>
<path d="M375.36 386.57 L380.86 382.37 V368.92 L375.36 373.12Z" fill="#8f3b38"/>
<rect x="358.36" y="359.40" width="17.0" height="13.72" fill="#9bbb59"/>
<path d="M375.36 373.12 L380.86 368.92 V355.20 L375.36 359.40Z" fill="#6f8a3e"/>
<path d="M358.36 359.40 L363.86 355.20 H380.86 L375.36 359.40Z" fill="#5a4780"/>
<text x="362.30" y="409.5" font-size="6.3" text-anchor="middle" font-family="Liberation Sans" fill="#5e5e5e">Jul</text>
<rect x="400.32" y="381.35" width="17.0" height="13.45" fill="#c0504d"/>
<path d="M417.32 394.80 L422.82 390.60 V377.15 L417.32 381.35Z" fill="#8f3b38"/>
<rect x="400.32" y="281.88" width="17.0" height="99.47" fill="#9bbb59"/>
<path d="M417.32 381.35 L422.82 377.15 V277.68 L417.32 281.88Z" fill="#6f8a3e"/>
<path d="M400.32 281.88 L405.82 277.68 H422.82 L417.32 281.88Z" fill="#5a4780"/>
<text x="404.15" y="409.5" font-size="6.3" text-anchor="middle" font-family="Liberation Sans" fill="#5e5e5e">Aug</text>
<rect x="442.28" y="369.42" width="17.0" height="25.38" fill="#4f81bd"/>
<path d="M459.28 394.80 L464.78 390.60 V365.22 L459.28 369.42Z" fill="#37608f"/>
<rect x="442.28" y="355.97" width="17.0" height="13.45" fill="#c0504d"/>
<path d="M459.28 369.42 L464.78 365.22 V351.77 L459.28 355.97Z" fill="#8f3b38"/>
<rect x="442.28" y="307.95" width="17.0" height="48.02" fill="#9bbb59"/>
<path d="M459.28 355.97 L464.78 351.77 V303.75 L459.28 307.95Z" fill="#6f8a3e"/>
<rect x="442.28" y="286.51" width="17.0" height="21.44" fill="#8064a2"/>
<path d="M459.28 307.95 L464.78 303.75 V282.31 L459.28 286.51Z" fill="#584676"/>
<path d="M442.28 286.51 L447.78 282.31 H464.78 L459.28 286.51Z" fill="#5a4780"/>
<text x="446.00" y="409.5" font-size="6.3" text-anchor="middle" font-family="Liberation Sans" fill="#5e5e5e">Sep</text>
<rect x="484.24" y="372.85" width="17.0" height="21.95" fill="#4f81bd"/>
<path d="M501.24 394.80 L506.74 390.60 V368.65 L501.24 372.85Z" fill="#37608f"/>
<rect x="484.24" y="359.40" width="17.0" height="13.45" fill="#c0504d"/>
<path d="M501.24 372.85 L506.74 368.65 V355.20 L501.24 359.40Z" fill="#8f3b38"/>
<rect x="484.24" y="355.97" width="17.0" height="3.43" fill="#9bbb59"/>
<path d="M501.24 359.40 L506.74 355.20 V351.77 L501.24 355.97Z" fill="#6f8a3e"/>
<path d="M484.24 355.97 L489.74 351.77 H506.74 L501.24 355.97Z" fill="#5a4780"/>
<text x="487.85" y="409.5" font-size="6.3" text-anchor="middle" font-family="Liberation Sans" fill="#5e5e5e">Oct</text>
<rect x="526.20" y="390.68" width="17.0" height="4.12" fill="#4f81bd"/>
<path d="M543.20 394.80 L548.70 390.60 V386.48 L543.20 390.68Z" fill="#37608f"/>
<rect x="526.20" y="377.24" width="17.0" height="13.45" fill="#c0504d"/>
<path d="M543.20 390.68 L548.70 386.48 V373.04 L543.20 377.24Z" fill="#8f3b38"/>
<rect x="526.20" y="373.81" width="17.0" height="3.43" fill="#9bbb59"/>
<path d="M543.20 377.24 L548.70 373.04 V369.61 L543.20 373.81Z" fill="#6f8a3e"/>
<path d="M526.20 373.81 L531.70 369.61 H548.70 L543.20 373.81Z" fill="#5a4780"/>
<text x="529.70" y="409.5" font-size="6.3" text-anchor="middle" font-family="Liberation Sans" fill="#5e5e5e">Nov</text>
<rect x="568.16" y="394.11" width="17.0" height="0.69" fill="#4f81bd"/>
<path d="M585.16 394.80 L590.66 390.60 V389.91 L585.16 394.11Z" fill="#37608f"/>
<rect x="568.16" y="380.67" width="17.0" height="13.45" fill="#c0504d"/>
<path d="M585.16 394.11 L590.66 389.91 V376.47 L585.16 380.67Z" fill="#8f3b38"/>
<rect x="568.16" y="342.94" width="17.0" height="37.73" fill="#9bbb59"/>
<path d="M585.16 380.67 L590.66 376.47 V338.74 L585.16 342.94Z" fill="#6f8a3e"/>
<rect x="568.16" y="321.50" width="17.0" height="21.44" fill="#8064a2"/>
<path d="M585.16 342.94 L590.66 338.74 V317.30 L585.16 321.50Z" fill="#584676"/>
<path d="M568.16 321.50 L573.66 317.30 H590.66 L585.16 321.50Z" fill="#5a4780"/>
<text x="571.55" y="409.5" font-size="6.3" text-anchor="middle" font-family="Liberation Sans" fill="#5e5e5e">Dec</text>
<text x="338.2" y="252.2" font-size="9.9" text-anchor="middle" font-family="Liberation Sans" fill="#595959">Expenses by month</text>
<rect x="265.2" y="424" width="3.3" height="3.3" fill="#4f81bd"/>
<text x="270.3" y="428" font-size="6.3" font-family="Liberation Sans" fill="#707070">Incentives</text>
<rect x="307.3" y="424" width="3.3" height="3.3" fill="#c0504d"/>
<text x="312.4" y="428" font-size="6.3" font-family="Liberation Sans" fill="#707070">Catering</text>
<rect x="343.8" y="424" width="3.3" height="3.3" fill="#9bbb59"/>
<text x="349.4" y="428" font-size="6.3" font-family="Liberation Sans" fill="#707070">Functions</text>
<rect x="385" y="424" width="3.3" height="3.3" fill="#8064a2"/>
<text x="390.2" y="428" font-size="6.3" font-family="Liberation Sans" fill="#707070">Training</text>
</svg>
<div class="a" style="left:0;top:474.6px;width:667px;height:26px;background:#f1f1f1;border-top:1px solid #dedede"></div>
<div class="a" style="left:28.5px;top:475px;width:57.5px;height:20.5px;background:#fff;box-shadow:0 0.6px 0.6px rgba(0,0,0,0.08)"></div>
<div class="a" style="left:145.3px;top:476px;width:0.8px;height:24px;background:#d8d8d8"></div>
<div class="a" style="left:176px;top:476px;width:0.8px;height:24px;background:#d8d8d8"></div>
<div class="a" style="left:42.5px;top:481px;font-size:9.1px;line-height:10px;color:#44906a">Sheet1</div>
<div class="a" style="left:101.7px;top:481px;font-size:9px;line-height:10px;color:#333">Sheet2</div>
<svg class="a" style="left:155px;top:480px" width="11" height="11"><path d="M5.5 1 V10 M1 5.5 H10" stroke="#444" stroke-width="0.9"/></svg>
<div class="a" style="left:611.4px;top:479.7px;width:45.6px;height:15.4px;background:#f3f3f3;border:0.7px solid #dedede;border-radius:8px"></div>
<div class="a" style="left:618.4px;top:482.2px;font-size:9.1px;line-height:10px;color:#444">Sum : <b style="color:#222">0</b></div>
</body></html>
